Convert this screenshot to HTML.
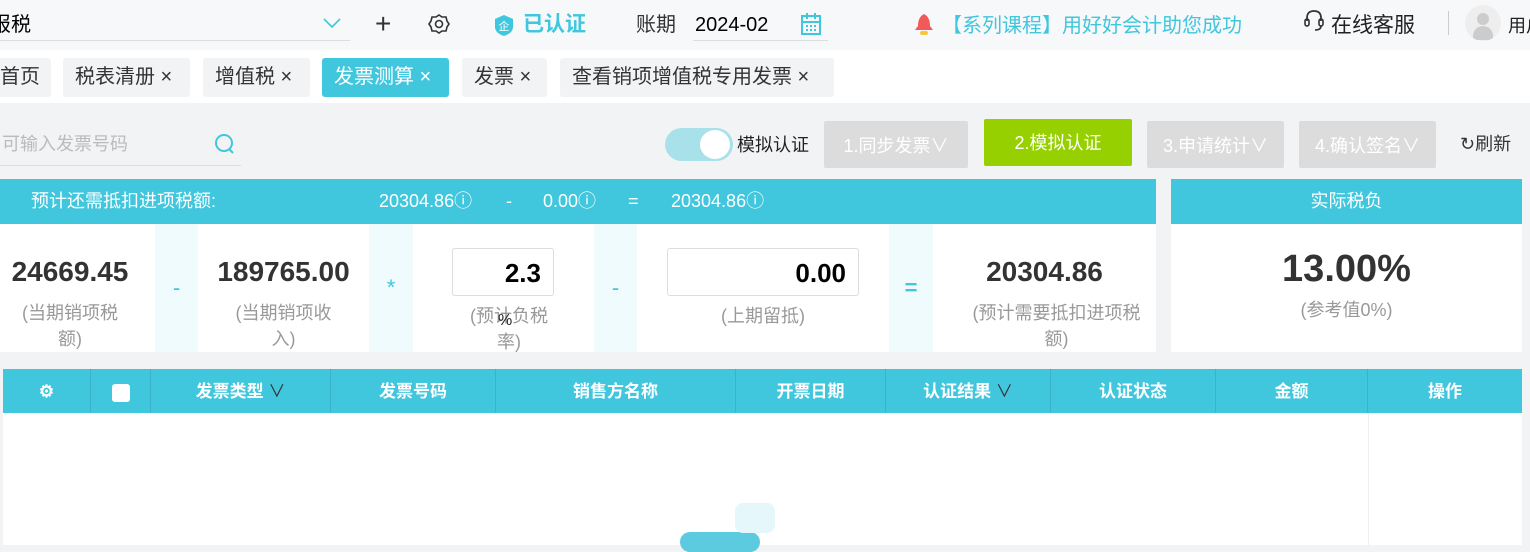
<!DOCTYPE html><html><head><meta charset="utf-8"><style>
*{margin:0;padding:0;box-sizing:border-box}
body{width:1530px;height:545px;overflow:hidden;position:relative;background:#f2f3f5;font-family:"Liberation Sans","Noto Sans CJK SC",sans-serif;color:#333}
.a{position:absolute;white-space:nowrap}
.tab{position:absolute;top:58px;height:39px;background:#f2f3f5;border-radius:3px;font-size:20px;line-height:39px;padding-left:12px;color:#333}
.c{text-align:center}
.c div{white-space:normal}
.g{color:#999;font-size:18px;line-height:26px}
.big{font-size:28px;font-weight:bold;color:#333}
.sep{position:absolute;top:224px;height:128px;background:#f0fbfd;color:#40c6dd;font-size:22px;text-align:center;line-height:128px}
.btn{position:absolute;top:121px;height:47px;background:#dcdcdc;color:#fff;font-size:18px;line-height:50px;text-align:center;border-radius:2px}
.th{position:absolute;top:369px;height:44px;line-height:46px;color:#fff;font-weight:bold;font-size:17px;text-align:center;border-right:1px solid #3ab3c8}
</style></head><body>
<div class="a" style="left:0;top:0;width:1530px;height:50px;background:#f7f8fa"></div>
<div class="a" style="left:-9px;top:10px;font-size:20px;line-height:30px;color:#000">报税</div>
<div class="a" style="left:0;top:40px;width:350px;height:1px;background:#ddd"></div>
<svg class="a" style="left:322px;top:16px" width="20" height="14"><path d="M2 3 L10 11 L18 3" fill="none" stroke="#40c6dd" stroke-width="1.6"/></svg>
<div class="a" style="left:375px;top:8px;font-size:28px;line-height:32px;color:#333">+</div>
<svg class="a" style="left:428px;top:13px" width="22" height="22"><circle cx="11" cy="11" r="3.5" fill="none" stroke="#333" stroke-width="1.6"/><path d="M11 2 L14 4 L18 4 L19 8 L21 11 L19 14 L18 18 L14 18 L11 20 L8 18 L4 18 L3 14 L1 11 L3 8 L4 4 L8 4 Z" fill="none" stroke="#333" stroke-width="1.6"/></svg>
<svg class="a" style="left:494px;top:14px" width="20" height="22"><path d="M10 1 L19 5 L19 13 Q19 19 10 22 Q1 19 1 13 L1 5 Z" fill="#40c6dd"/><text x="10" y="16" font-size="11" fill="#fff" text-anchor="middle" font-family="Noto Sans CJK SC">企</text></svg>
<div class="a" style="left:523px;top:10px;font-size:21px;font-weight:bold;color:#40c6dd;line-height:30px">已认证</div>
<div class="a" style="left:636px;top:10px;font-size:20px;line-height:30px;color:#333">账期</div>
<div class="a" style="left:695px;top:10px;font-size:20px;line-height:30px;color:#000">2024-02</div>
<div class="a" style="left:693px;top:40px;width:135px;height:1px;background:#ddd"></div>
<svg class="a" style="left:800px;top:12px" width="22" height="24"><rect x="2" y="4" width="18" height="18" fill="none" stroke="#40c6dd" stroke-width="2"/><path d="M7 1v6M15 1v6M2 10h18M6 14h2M10 14h2M14 14h2M6 18h2M10 18h2M14 18h2" stroke="#40c6dd" stroke-width="2"/></svg>
<svg class="a" style="left:913px;top:13px" width="22" height="24"><path d="M11 1 Q5 4 5 13 L2 17 L20 17 L17 13 Q17 4 11 1Z" fill="#f25a5a"/><rect x="7" y="18" width="8" height="4" rx="2" fill="#f7c63c"/></svg>
<div class="a" style="left:942px;top:11px;font-size:20px;line-height:30px;color:#40c6dd">【系列课程】用好好会计助您成功</div>
<svg class="a" style="left:1303px;top:9px" width="22" height="24"><path d="M4 12 V9 Q4 2 11 2 Q18 2 18 9 V12" fill="none" stroke="#333" stroke-width="1.8"/><rect x="2" y="10" width="4" height="7" rx="2" fill="none" stroke="#333" stroke-width="1.6"/><rect x="16" y="10" width="4" height="7" rx="2" fill="none" stroke="#333" stroke-width="1.6"/><path d="M18 17 Q18 21 12 21" fill="none" stroke="#333" stroke-width="1.6"/></svg>
<div class="a" style="left:1331px;top:11px;font-size:21px;line-height:30px;color:#222">在线客服</div>
<div class="a" style="left:1448px;top:11px;width:1px;height:24px;background:#ccc"></div>
<div class="a" style="left:1465px;top:5px;width:36px;height:36px;border-radius:50%;background:#eee;overflow:hidden"><div class="a" style="left:12px;top:8px;width:12px;height:12px;border-radius:50%;background:#ccc"></div><div class="a" style="left:8px;top:21px;width:20px;height:14px;border-radius:10px 10px 0 0;background:#ccc"></div></div>
<div class="a" style="left:1508px;top:12px;font-size:18px;line-height:28px;color:#222">用户</div>

<div class="a" style="left:0;top:50px;width:1530px;height:53px;background:#fff"></div>
<div class="tab" style="left:-10px;width:61px;padding-left:10px">首页</div>
<div class="tab" style="left:63px;width:127px">税表清册 ×</div>
<div class="tab" style="left:203px;width:107px">增值税 ×</div>
<div class="tab" style="left:322px;width:127px;background:#40c6dd;color:#fff">发票测算 ×</div>
<div class="tab" style="left:462px;width:85px">发票 ×</div>
<div class="tab" style="left:560px;width:274px">查看销项增值税专用发票 ×</div>

<div class="a" style="left:2px;top:130px;font-size:18px;line-height:28px;color:#bbb">可输入发票号码</div>
<div class="a" style="left:0;top:165px;width:241px;height:1px;background:#ddd"></div>
<svg class="a" style="left:213px;top:132px" width="24" height="24"><circle cx="11" cy="11" r="8" fill="none" stroke="#40c6dd" stroke-width="2"/><path d="M16 17 L20 21" stroke="#40c6dd" stroke-width="2"/></svg>
<div class="a" style="left:665px;top:128px;width:68px;height:33px;border-radius:17px;background:#a8e1ea"></div>
<div class="a" style="left:700px;top:130px;width:30px;height:29px;border-radius:50%;background:#fff"></div>
<div class="a" style="left:737px;top:131px;font-size:18px;line-height:28px;color:#222">模拟认证</div>
<div class="btn" style="left:824px;width:144px">1.同步发票∨</div>
<div class="btn" style="left:984px;top:119px;width:148px;background:#97d000;line-height:48px">2.模拟认证</div>
<div class="btn" style="left:1147px;width:137px">3.申请统计∨</div>
<div class="btn" style="left:1299px;width:137px">4.确认签名∨</div>
<div class="a" style="left:1460px;top:131px;font-size:18px;line-height:26px;color:#333">↻刷新</div>

<div class="a" style="left:0;top:179px;width:1156px;height:45px;background:#40c6dd;color:#fff;font-size:18px;line-height:45px">
<span class="a" style="left:31px">预计还需抵扣进项税额:</span>
<span class="a" style="left:379px">20304.86ⓘ</span><span class="a" style="left:506px">-</span>
<span class="a" style="left:543px">0.00ⓘ</span><span class="a" style="left:628px">=</span>
<span class="a" style="left:671px">20304.86ⓘ</span></div>
<div class="a" style="left:1171px;top:179px;width:351px;height:45px;background:#40c6dd;color:#fff;font-size:18px;line-height:45px;text-align:center">实际税负</div>
<div class="a" style="left:0;top:224px;width:1156px;height:128px;background:#fff"></div>
<div class="a" style="left:1171px;top:224px;width:351px;height:128px;background:#fff"></div>
<div class="sep" style="left:155px;width:43px">-</div>
<div class="sep" style="left:369px;width:44px">*</div>
<div class="sep" style="left:594px;width:43px">-</div>
<div class="sep" style="left:889px;width:44px;font-weight:bold">=</div>
<div class="a c" style="left:0;top:256px;width:140px"><div class="big">24669.45</div><div class="g" style="padding:0 20px;margin-top:12px">(当期销项税额)</div></div>
<div class="a c" style="left:198px;top:256px;width:171px"><div class="big">189765.00</div><div class="g" style="padding:0 30px;margin-top:12px">(当期销项收入)</div></div>
<div class="a" style="left:452px;top:248px;width:102px;height:48px;border:1px solid #ddd;border-radius:3px;background:#fff;text-align:right;padding-right:12px;font-size:26px;font-weight:bold;line-height:48px;color:#000">2.3</div>
<div class="a c" style="left:464px;top:303px;width:90px"><div class="g">(预计负税率)</div></div>
<div class="a" style="left:498px;top:312px;font-size:16px;color:#222">%</div>
<div class="a" style="left:667px;top:248px;width:192px;height:48px;border:1px solid #ddd;border-radius:3px;background:#fff;text-align:right;padding-right:12px;font-size:26px;font-weight:bold;line-height:48px;color:#000">0.00</div>
<div class="a c g" style="left:667px;top:303px;width:192px">(上期留抵)</div>
<div class="a c" style="left:933px;top:256px;width:223px"><div class="big">20304.86</div><div class="g" style="padding:0 12px 0 36px;margin-top:12px">(预计需要抵扣进项税额)</div></div>
<div class="a c" style="left:1171px;top:248px;width:351px"><div style="font-size:38px;font-weight:bold;color:#333">13.00%</div><div class="g" style="margin-top:6px">(参考值0%)</div></div>

<div class="a" style="left:3px;top:369px;width:1519px;height:44px;background:#40c6dd"></div>
<div class="th" style="left:3px;width:88px">⚙</div>
<div class="th" style="left:91px;width:60px"><span style="display:inline-block;width:18px;height:18px;background:#fff;border-radius:3px;vertical-align:middle"></span></div>
<div class="th" style="left:151px;width:180px">发票类型 <span style="font-weight:normal;color:#333">∨</span></div>
<div class="th" style="left:331px;width:165px">发票号码</div>
<div class="th" style="left:496px;width:240px">销售方名称</div>
<div class="th" style="left:736px;width:150px">开票日期</div>
<div class="th" style="left:886px;width:165px">认证结果 <span style="font-weight:normal;color:#333">∨</span></div>
<div class="th" style="left:1051px;width:165px">认证状态</div>
<div class="th" style="left:1216px;width:152px">金额</div>
<div class="th" style="left:1368px;width:154px;border:none">操作</div>
<div class="a" style="left:3px;top:413px;width:1519px;height:132px;background:#fff"></div>
<div class="a" style="left:1368px;top:413px;width:1px;height:132px;background:#f0f0f0"></div>
<div class="a" style="left:680px;top:532px;width:80px;height:20px;border-radius:10px;background:#5ccbe0"></div>
<div class="a" style="left:735px;top:503px;width:40px;height:30px;border-radius:8px;background:#e6f7fb"></div>
</body></html>
